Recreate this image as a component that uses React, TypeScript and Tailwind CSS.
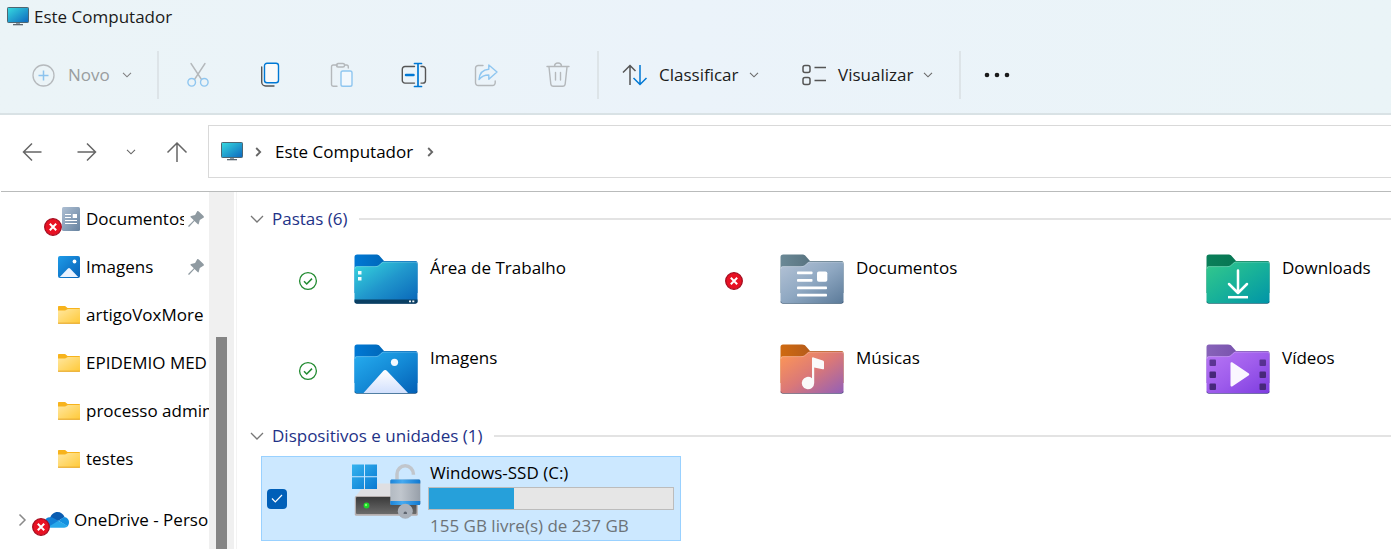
import type { ReactNode } from 'react';

type Status = 'synced' | 'error' | null;

function Chevron({ className = 'text-[#6a6a6a]' }: { className?: string }) {
  return (
    <svg width="10" height="6" viewBox="0 0 10 6" fill="none" className={`shrink-0 ${className}`} aria-hidden="true">
      <path d="M1 .8 5 4.800 9 .8" stroke="currentColor" strokeWidth="1.100" />
    </svg>
  );
}

function MonitorIcon() {
  return (
    <svg width="22" height="19" viewBox="0 0 22 19" className="shrink-0" aria-hidden="true">
      <defs>
        <linearGradient id="screen" x1="0" y1="0" x2="1" y2="1">
          <stop offset="0" stopColor="#36dbe0" />
          <stop offset="1" stopColor="#0d66be" />
        </linearGradient>
      </defs>
      <path d="M9 15h4v2.500H9z" fill="#8f9aa3" />
      <path d="M6 17h10v1.300H6z" fill="#5b6770" />
      <rect x=".5" y=".5" width="21" height="15" rx=".8" fill="url(#screen)" stroke="#4d6672" />
    </svg>
  );
}

function ErrorBadge() {
  return (
    <svg width="18" height="18" viewBox="0 0 18 18" className="shrink-0" role="img" aria-label="Erro de sincronização">
      <circle cx="9" cy="9" r="8.300" fill="#e81123" stroke="#a30d20" strokeWidth="1.300" />
      <path d="m5.800 5.800 6.400 6.400m0-6.400-6.400 6.400" stroke="#fff" strokeWidth="2" />
    </svg>
  );
}

function SyncedBadge() {
  return (
    <svg width="20" height="20" viewBox="0 0 20 20" fill="none" className="shrink-0" role="img" aria-label="Sincronizado">
      <circle cx="10" cy="10" r="8.400" stroke="#218a30" strokeWidth="1.300" />
      <path d="m6 10.300 2.700 2.700L14 7.600" stroke="#218a30" strokeWidth="1.500" />
    </svg>
  );
}

interface FolderProps {
  id: string;
  tab: [string, string];
  body: [string, string, string];
  children: ReactNode;
}

function BigFolder({ id, tab, body, children }: FolderProps) {
  return (
    <svg width="64" height="50" viewBox="0 0 64 50" className="shrink-0" aria-hidden="true">
      <defs>
        <linearGradient id={`${id}-tab`} x1="0" y1="0" x2="1" y2="0">
          <stop offset="0" stopColor={tab[0]} />
          <stop offset=".5" stopColor={tab[1]} />
        </linearGradient>
        <linearGradient id={`${id}-body`} x1="0" y1="0" x2="1" y2="1">
          <stop offset="0" stopColor={body[0]} />
          <stop offset=".5" stopColor={body[1]} />
          <stop offset="1" stopColor={body[2]} />
        </linearGradient>
      </defs>
      <path d="M.5 3a2.500 2.500 0 0 1 2.500-2.500h19c2.200 0 3.200.8 4.300 2.200L30 7h31.500a2 2 0 0 1 2 2v30H.5z" fill={`url(#${id}-tab)`} />
      <path
        d="M.5 14.500a2.300 2.300 0 0 1 2.300-2.300H21c2.500 0 3.400-.5 4.600-1.700l1.500-1.500C28 8 28.700 7.700 30.500 7.700h31a2 2 0 0 1 2 2V47a2.500 2.500 0 0 1-2.500 2.500H3A2.500 2.500 0 0 1 .5 47z"
        fill={`url(#${id}-body)`}
      />
      <path
        d="M.9 15c0-1.600.9-2.400 2.300-2.400H21c2.500 0 3.600-.6 4.800-1.800l1.500-1.500c.8-.8 1.600-1.200 3.200-1.200h31c1 0 1.600.6 1.600 1.600"
        fill="none"
        stroke="#fff"
        strokeOpacity=".3"
        strokeWidth=".8"
      />
      {children}
      <path d="M.8 47.500C1 49 2 49.500 3 49.500h58c1.200 0 2.100-.6 2.300-2" fill="none" stroke="#002440" strokeOpacity=".4" strokeWidth="1" />
    </svg>
  );
}

const desktopFolder = (
  <BigFolder id="desk" tab={['#0078d4', '#0067b8']} body={['#37d8de', '#2096cc', '#0864b8']}>
    <path d="M.5 45.500h63V47a2.500 2.500 0 0 1-2.500 2.500H3A2.500 2.500 0 0 1 .5 47z" fill="#0a3f63" />
    <path d="M4 17h3.500v3.500H4zM4 23h3.500v3.500H4zM55 46.500h2v1.700h-2zM58.300 46.500h2v1.700h-2z" fill="#fff" fillOpacity=".95" />
  </BigFolder>
);

const picturesFolder = (
  <BigFolder id="pics" tab={['#0078d4', '#0067b8']} body={['#27aef0', '#148ad6', '#035fb5']}>
    <defs>
      <linearGradient id="mountain" x1="0" y1="0" x2="0" y2="1">
        <stop offset="0" stopColor="#fff" />
        <stop offset="1" stopColor="#d2e0fd" />
      </linearGradient>
    </defs>
    <path d="M9.500 49 29 27.300c1.500-1.700 2.800-1.700 4.300 0L54 49z" fill="url(#mountain)" />
    <circle cx="40.500" cy="18.300" r="3.600" fill="#f2f8ff" />
  </BigFolder>
);

const documentsFolder = (
  <BigFolder id="docs" tab={['#6b8996', '#57727f']} body={['#b4c3d6', '#8fa8c2', '#5b7a99']}>
    <g fill="#fff">
      <rect x="17" y="17.500" width="15.500" height="2.800" rx=".8" />
      <rect x="17" y="25" width="15.500" height="2.800" rx=".8" />
      <rect x="17" y="32.500" width="30" height="2.800" rx=".8" />
      <rect x="17" y="39.700" width="30" height="2.800" rx=".8" />
      <rect x="37" y="17.500" width="10.300" height="10.300" rx="1.800" />
    </g>
  </BigFolder>
);

const musicFolder = (
  <BigFolder id="music" tab={['#cf6a10', '#b45b1b']} body={['#ff9854', '#da7878', '#925fb8']}>
    <path d="M32 14.300c0-.9.700-1.200 1.500-.9l9.300 3.200c.9.300 1.200.8 1.200 1.700v6.200c0 .8-.6 1-1.300.7l-8.500-1.800V39a6.200 6.200 0 1 1-2.200-4.700z" fill="#fafafa" />
  </BigFolder>
);

const downloadsFolder = (
  <BigFolder id="down" tab={['#0a7f59', '#077653']} body={['#35c98b', '#18b199', '#0094a8']}>
    <path d="M32 16.500v22M23 30l9 9 9-9" fill="none" stroke="#fff" strokeWidth="2.500" strokeLinecap="round" strokeLinejoin="round" />
    <path d="M22 43.200h20" stroke="#fff" strokeWidth="2.500" />
  </BigFolder>
);

const videosFolder = (
  <BigFolder id="video" tab={['#8763b9', '#7953ad']} body={['#b877f5', '#9f5dec', '#7d3ce0']}>
    <g fill="#47287a">
      <rect x="3.500" y="15.500" width="6.500" height="6.500" rx="1" opacity=".8" />
      <rect x="3.500" y="27.500" width="6.500" height="6.500" rx="1" />
      <rect x="3.500" y="39.500" width="6.500" height="6.500" rx="1" />
      <rect x="53.500" y="15.500" width="6.500" height="6.500" rx="1" opacity=".8" />
      <rect x="53.500" y="27.500" width="6.500" height="6.500" rx="1" />
      <rect x="53.500" y="39.500" width="6.500" height="6.500" rx="1" />
    </g>
    <path d="M24.500 19.500c0-1.300 1-1.700 2-1l16 10.700c1 .7 1 1.500 0 2.200l-16 10.800c-1 .7-2 .2-2-1z" fill="#faf7ff" />
  </BigFolder>
);

function DriveIcon() {
  return (
    <svg width="69" height="56" viewBox="0 0 69 56" className="shrink-0" aria-hidden="true">
      <defs>
        <linearGradient id="logo" x1="0" y1="0" x2="1" y2="1">
          <stop offset="0" stopColor="#36b3ef" />
          <stop offset="1" stopColor="#0879d2" />
        </linearGradient>
        <linearGradient id="case" x1="0" y1="0" x2="0" y2="1">
          <stop offset="0" stopColor="#3a3a3a" />
          <stop offset="1" stopColor="#6b6b6b" />
        </linearGradient>
        <linearGradient id="lock" x1="0" y1="0" x2="1" y2="0">
          <stop offset="0" stopColor="#b3bac2" />
          <stop offset=".35" stopColor="#c0c6cd" />
          <stop offset="1" stopColor="#979fa9" />
        </linearGradient>
        <linearGradient id="band" x1="0" y1="0" x2="1" y2="0">
          <stop offset="0" stopColor="#1b84d8" />
          <stop offset=".4" stopColor="#46aaf0" />
          <stop offset="1" stopColor="#1178cf" />
        </linearGradient>
      </defs>
      <path d="M3 34 14 20.500h42L66 34z" fill="#dfdfe2" />
      <rect x="2.800" y="33" width="63" height="19.800" rx="1.500" fill="#b5aeae" />
      <rect x="4" y="34" width="60.500" height="17" rx="1" fill="url(#case)" />
      <circle cx="14.500" cy="42.500" r="2.900" fill="#1bd728" />
      <circle cx="14" cy="42" r="1.200" fill="#7dff6a" />
      <path d="M0 1.500h12v11.700H0zM13 1.500h12v11.700H13zM0 14.200h12V26H0zM13 14.200h12V26H13z" fill="url(#logo)" />
      <path d="M45 17v-6a8.200 8.200 0 0 1 16.400 0v.8" fill="none" stroke="#c1c6cc" strokeWidth="3.500" />
      <rect x="38.300" y="16.500" width="30" height="25.500" rx="1.500" fill="url(#lock)" />
      <path d="M38.300 18c0-1 .7-1.500 1.500-1.500h27c1 0 1.500.5 1.500 1.500v2.500h-30zM38.300 38h30v2.500c0 1-.6 1.500-1.500 1.500h-27c-1 0-1.500-.6-1.500-1.500z" fill="url(#band)" />
      <circle cx="53.300" cy="48.300" r="7.500" fill="#aab1ba" />
      <path d="M53.300 48.500a1.700 1.700 0 0 1 1.700 1.700v.8h-3.400v-.8a1.700 1.700 0 0 1 1.700-1.700z" fill="#5f6670" />
    </svg>
  );
}

function SmallFolder() {
  return (
    <svg width="22" height="18" viewBox="0 0 22 18" className="shrink-0" aria-hidden="true">
      <defs>
        <linearGradient id="yellow" x1="0" y1="0" x2="1" y2="1">
          <stop offset="0" stopColor="#ffe7a0" />
          <stop offset="1" stopColor="#ffc937" />
        </linearGradient>
      </defs>
      <path d="M0 1C0 .4.400 0 1 0h5.500c.8 0 1.300.5 1.800 1L9.500 2H21c.6 0 1 .4 1 1v6H0z" fill="#f7b31c" />
      <path d="M0 4.500h6.800c.8 0 1.200-.2 1.700-.7.500-.6 1-.8 1.700-.8H22v14c0 .5-.3.700-.8.700H.8c-.5 0-.8-.2-.8-.7z" fill="url(#yellow)" />
      <path d="M0 17.200h22" stroke="#e5a52a" strokeWidth="1" />
    </svg>
  );
}

function SmallDocument() {
  return (
    <svg width="18" height="24" viewBox="0 0 18 24" className="shrink-0" aria-hidden="true">
      <defs>
        <linearGradient id="sheet" x1="0" y1="0" x2="1" y2="1">
          <stop offset="0" stopColor="#aebfd3" />
          <stop offset="1" stopColor="#6783a0" />
        </linearGradient>
      </defs>
      <rect width="18" height="24" rx="1.500" fill="url(#sheet)" />
      <path d="M3 7.500h6M3 10.500h6M3 13.500h12M3 16.500h12" stroke="#fff" strokeWidth="1.200" />
      <path d="M10.700 7h4.300v4h-4.300z" fill="#fff" />
    </svg>
  );
}

function SmallPicture() {
  return (
    <svg width="22" height="22" viewBox="0 0 22 22" className="shrink-0" aria-hidden="true">
      <defs>
        <linearGradient id="photo" x1="0" y1="0" x2="1" y2="1">
          <stop offset="0" stopColor="#1e9be8" />
          <stop offset="1" stopColor="#0860b6" />
        </linearGradient>
      </defs>
      <rect width="22" height="22" rx="2" fill="url(#photo)" />
      <path d="m1.800 21 7.900-8.300c.9-.9 1.700-.9 2.600 0L20.200 21z" fill="#eaf2ff" />
      <circle cx="16.500" cy="5.500" r="1.900" fill="#fff" />
    </svg>
  );
}

function CloudIcon() {
  return (
    <svg width="24" height="16" viewBox="0 0 24 16" className="shrink-0" aria-hidden="true">
      <path d="M5 6C6.200 2.500 9 0 12.500 0c3.200 0 6 2 7 5l-6.500 4z" fill="#0a5cb0" />
      <path d="M5 5.200c1.500 0 3 .5 4.200 1.300L14 9.300 4.500 15.500A5 5 0 0 1 5 5.200z" fill="#1280d6" />
      <path d="M13.500 8.700 19 5c3 .1 5 2.500 5 5.400 0 1.500-.6 2.800-1.500 3.800z" fill="#1490df" />
      <path d="m13.500 8.700 9.300 5.300c-.9 1-2.100 1.700-3.600 1.700H5.500c-1 0-1.700-.2-2.500-.6z" fill="#28a8ea" />
    </svg>
  );
}

function PinIcon() {
  return (
    <svg width="16" height="16" viewBox="0 0 16 16" className="shrink-0" aria-hidden="true">
      <path d="M9.200.3c.6-.5 1.100-.3 1.600.2l4.700 4.600c.5.500.6 1.200-.1 1.600l-3.600 2.200-1 3.900c-.2.600-.7.800-1.200.3L6.500 10 1.300 15.700H.3v-1L5.800 9.300 2.700 6.300c-.5-.5-.2-1 .4-1.200l4-1.100z" fill="#8f9aa1" />
    </svg>
  );
}

interface ToolButtonProps {
  label: string;
  disabled?: boolean;
  children: ReactNode;
}

function ToolButton({ label, disabled, children }: ToolButtonProps) {
  return (
    <button type="button" aria-label={label} disabled={disabled} className="flex h-12 w-12 shrink-0 items-center justify-center rounded">
      <svg width="26" height="26" viewBox="0 0 26 26" fill="none" strokeWidth="1.400" strokeLinecap="round" strokeLinejoin="round" aria-hidden="true">
        {children}
      </svg>
    </button>
  );
}

function Divider() {
  return <div className="h-12 w-0.5 shrink-0 bg-[#dde4e8]" />;
}

function Toolbar() {
  return (
    <div role="toolbar" aria-label="Comandos" className="flex h-[78px] items-center pt-0.5 pl-8">
      <button type="button" disabled className="flex h-12 w-[125px] shrink-0 items-center text-[#999d9f]">
        <svg width="23" height="23" viewBox="0 0 23 23" fill="none" aria-hidden="true">
          <circle cx="11.500" cy="11.500" r="10.500" stroke="#b6babd" strokeWidth="1.300" />
          <path d="M11.500 6.500v10M6.500 11.500h10" stroke="#8cc3ee" strokeWidth="1.500" />
        </svg>
        <span className="mr-3 ml-[13px]">Novo</span>
        <Chevron className="text-[#808080]" />
      </button>
      <Divider />
      <div className="mx-[15px] flex gap-6">
        <ToolButton label="Recortar" disabled>
          <path d="M6 1.500 16.500 17.500M20 1.500 9.500 17.500" stroke="#b4b8bb" />
          <circle cx="6.700" cy="20.300" r="3.800" stroke="#8fc6f0" />
          <circle cx="19.300" cy="20.300" r="3.800" stroke="#8fc6f0" />
        </ToolButton>
        <ToolButton label="Copiar">
          <path d="M4.700 5v15a4 4 0 0 0 4 4H17" stroke="#555" />
          <rect x="7.500" y="1.300" width="14" height="19.500" rx="2.500" fill="#fafafa" stroke="#0078d4" />
        </ToolButton>
        <ToolButton label="Colar" disabled>
          <path d="M8.500 3H4.300C3 3 2.500 3.700 2.500 5v17.500c0 1 .6 1.700 1.700 1.700H8M16 3h1.500c1.200 0 1.800.6 1.800 1.800V6" stroke="#b4b8bb" />
          <rect x="7.500" y="1.500" width="8" height="3.500" rx="1.500" stroke="#b4b8bb" />
          <rect x="12" y="9" width="11" height="15.200" rx="1.800" fill="#f2f8fd" stroke="#8fc6f0" />
        </ToolButton>
        <ToolButton label="Renomear">
          <path d="M13.500 4.500H4a2.700 2.700 0 0 0-2.700 2.700v11.200A2.700 2.700 0 0 0 4 21.100h9.500M20 4.500h1.800a2.700 2.700 0 0 1 2.700 2.700v11.200a2.700 2.700 0 0 1-2.700 2.700H20" stroke="#555" />
          <path d="M17 1.500v23M13.500 1.500h7M13.500 24.500h7" stroke="#0078d4" strokeWidth="1.700" />
          <path d="M5 13h7.500" stroke="#0078d4" strokeWidth="2.500" />
        </ToolButton>
        <ToolButton label="Compartilhar" disabled>
          <path d="M10 3.500H5.200A2.700 2.700 0 0 0 2.500 6.200v14.600a2.700 2.700 0 0 0 2.700 2.700h14.300a2.700 2.700 0 0 0 2.700-2.700V19" stroke="#b4b8bb" />
          <path d="M15.800 3v4.200C9.500 7.700 6.500 11 6 17.500c2.500-3.300 5.500-4.500 9.800-4.500v4.300L24 10z" stroke="#8fc6f0" />
        </ToolButton>
        <ToolButton label="Excluir" disabled>
          <path d="M2 4.500h22M4 5l1.800 17a2.700 2.700 0 0 0 2.600 2.300h9.200a2.700 2.700 0 0 0 2.600-2.300L22 5M9.500 4c.3-4 6.700-4 7 0M10.500 10.500v7.500M15.500 10.500v7.500" stroke="#b4b8bb" />
        </ToolButton>
      </div>
      <Divider />
      <button type="button" className="ml-[23px] flex h-12 w-[137px] shrink-0 items-center text-[#1b1b1b]">
        <svg width="26" height="22" viewBox="0 0 26 22" fill="none" strokeWidth="1.500" className="shrink-0" aria-hidden="true">
          <path d="M8 21V1.500M1 8.500l7-7 5.500 5.500" stroke="#555" />
          <path d="M18 1v19.500M11.500 14l6.500 6.500 6.500-6.500" stroke="#0078d4" />
        </svg>
        <span className="mr-2.5 ml-[11px]">Classificar</span>
        <Chevron />
      </button>
      <button type="button" className="ml-[43px] flex h-12 w-[133px] shrink-0 items-center text-[#1b1b1b]">
        <svg width="25" height="22" viewBox="0 0 25 22" fill="none" stroke="#555" strokeWidth="1.500" className="shrink-0" aria-hidden="true">
          <rect x="1" y="1.500" width="7" height="7" rx="2" />
          <rect x="1" y="13.500" width="7" height="7" rx="2" />
          <path d="M12.500 3.500H24M12.500 16.500H24" />
        </svg>
        <span className="mr-2.5 ml-[11px]">Visualizar</span>
        <Chevron />
      </button>
      <div className="ml-6">
        <Divider />
      </div>
      <button type="button" aria-label="Ver mais" className="ml-3 flex h-12 w-12 shrink-0 items-center justify-center">
        <svg width="26" height="6" viewBox="0 0 26 6" fill="#1b1b1b" aria-hidden="true">
          <circle cx="3" cy="3" r="2.300" />
          <circle cx="13" cy="3" r="2.300" />
          <circle cx="23" cy="3" r="2.300" />
        </svg>
      </button>
    </div>
  );
}

function NavButton({ label, children }: { label: string; children: ReactNode }) {
  return (
    <button type="button" aria-label={label} className="flex h-10 w-10 shrink-0 items-center justify-center">
      <svg width="22" height="22" viewBox="0 0 22 22" fill="none" stroke="#666" strokeWidth="1.500" aria-hidden="true">
        {children}
      </svg>
    </button>
  );
}

function Crumb() {
  return (
    <svg width="7" height="10" viewBox="0 0 7 10" fill="none" className="shrink-0" aria-hidden="true">
      <path d="m1.200 1 4 4-4 4" stroke="#666" strokeWidth="1.800" />
    </svg>
  );
}

function NavigationBar() {
  return (
    <nav aria-label="Navegação" className="ml-px flex h-[77px] items-center border-b border-[#b9bbbb] pb-[3px] pl-3">
      <NavButton label="Voltar">
        <path d="M19.500 11h-18M10 2.500 1.500 11l8.500 8.500" />
      </NavButton>
      <div className="ml-3.5">
        <NavButton label="Avançar">
          <path d="M1.500 11h18M11 2.500l8.500 8.500-8.500 8.500" />
        </NavButton>
      </div>
      <button type="button" aria-label="Locais recentes" className="ml-1 flex h-10 w-10 shrink-0 items-center justify-center">
        <Chevron className="text-[#666]" />
      </button>
      <div className="ml-1.5">
        <NavButton label="Para cima">
          <path d="M11 21V2M1.500 11.500 11 2l9.500 9.500" />
        </NavButton>
      </div>
      <div className="-mr-1 ml-[11px] flex h-[53px] flex-1 items-center border border-[#d9d9d9] pl-3">
        <MonitorIcon />
        <span className="mr-[13px] ml-3">
          <Crumb />
        </span>
        <a href="#este-computador">Este Computador</a>
        <span className="ml-3.5">
          <Crumb />
        </span>
      </div>
    </nav>
  );
}

interface SideItem {
  name: string;
  icon: ReactNode;
  pinned?: boolean;
  error?: boolean;
}

const sideItems: SideItem[] = [
  { name: 'Documentos', icon: <SmallDocument />, pinned: true, error: true },
  { name: 'Imagens', icon: <SmallPicture />, pinned: true },
  { name: 'artigoVoxMore', icon: <SmallFolder /> },
  { name: 'EPIDEMIO MED', icon: <SmallFolder /> },
  { name: 'processo administrativo', icon: <SmallFolder /> },
  { name: 'testes', icon: <SmallFolder /> },
];

function Sidebar() {
  return (
    <aside className="flex w-[236px] shrink-0 overflow-hidden">
      <div className="w-[209px] overflow-hidden pt-[3px]">
        <ul>
          {sideItems.map((item) => (
            <li key={item.name}>
              <a href={`#${item.name}`} className="relative flex h-12 items-center gap-1.5 pl-[58px]">
                <span className={item.error ? 'flex w-[22px] shrink-0 justify-end' : 'flex w-[22px] shrink-0 justify-center'}>{item.icon}</span>
                {item.error && (
                  <span className="absolute top-[23px] left-11">
                    <ErrorBadge />
                  </span>
                )}
                <span className={item.pinned ? 'w-[98px] overflow-hidden whitespace-nowrap' : 'flex-1 overflow-hidden whitespace-nowrap'}>{item.name}</span>
                {item.pinned && (
                  <span className="-ml-0.5">
                    <PinIcon />
                  </span>
                )}
              </a>
            </li>
          ))}
        </ul>
        <a href="#onedrive" className="relative mt-[13px] flex h-12 items-center pl-[18px]">
          <svg width="9" height="14" viewBox="0 0 9 14" fill="none" className="shrink-0" aria-hidden="true">
            <path d="m1.500 1.500 5.500 5.500-5.500 5.500" stroke="#8a8a8a" strokeWidth="1.500" />
          </svg>
          <span className="ml-[18px]">
            <CloudIcon />
          </span>
          <span className="absolute top-[22px] left-8">
            <ErrorBadge />
          </span>
          <span className="ml-[5px] flex-1 overflow-hidden whitespace-nowrap">OneDrive - Personal</span>
        </a>
      </div>
      <div className="flex w-[25px] justify-center bg-[#f0f0f0] pt-[145px]">
        <div className="w-[11px] bg-[#858585]" />
      </div>
    </aside>
  );
}

function GroupHeader({ children }: { children: ReactNode }) {
  return (
    <h2 className="flex h-10 items-center text-[#1e3287]">
      <button type="button" className="flex shrink-0 items-center gap-2">
        <svg width="14" height="8" viewBox="0 0 14 8" fill="none" aria-hidden="true">
          <path d="m1 1 6 6 6-6" stroke="#777" strokeWidth="1.300" />
        </svg>
        {children}
      </button>
      <span className="ml-[11px] h-0.5 flex-1 bg-[#e3e3e3]" />
    </h2>
  );
}

const folders: { name: string; status: Status; icon: ReactNode }[] = [
  { name: 'Área de Trabalho', status: 'synced', icon: desktopFolder },
  { name: 'Documentos', status: 'error', icon: documentsFolder },
  { name: 'Downloads', status: null, icon: downloadsFolder },
  { name: 'Imagens', status: 'synced', icon: picturesFolder },
  { name: 'Músicas', status: null, icon: musicFolder },
  { name: 'Vídeos', status: null, icon: videosFolder },
];

function Content() {
  return (
    <main className="min-w-0 flex-1 overflow-hidden border-l border-[#f3f3f3] pt-[7px] pl-[13px]">
      <section>
        <GroupHeader>Pastas (6)</GroupHeader>
        <ul className="ml-[11px] grid grid-cols-[repeat(3,420px)] gap-1.5">
          {folders.map((folder) => (
            <li key={folder.name}>
              <a href={`#${folder.name}`} className="flex h-[84px]">
                <span className="flex w-[93px] items-center justify-center">
                  {folder.status === 'synced' && <SyncedBadge />}
                  {folder.status === 'error' && <ErrorBadge />}
                </span>
                <span className="pt-[15px]">{folder.icon}</span>
                <span className="pt-[17px] pl-3 leading-6">{folder.name}</span>
              </a>
            </li>
          ))}
        </ul>
      </section>
      <section className="mt-[3px]">
        <GroupHeader>Dispositivos e unidades (1)</GroupHeader>
        <div className="ml-[11px] flex h-[85px] w-[420px] border border-[#99d1ff] bg-[#cce8ff]">
          <label className="flex w-[90px] items-center pl-[5px]">
            <input type="checkbox" defaultChecked aria-label="Selecionar Windows-SSD (C:)" className="peer sr-only" />
            <span className="flex h-5 w-5 items-center justify-center rounded bg-[#005fb8]">
              <svg width="12" height="9" viewBox="0 0 12 9" fill="none" aria-hidden="true">
                <path d="m1 4.500 3.300 3.300L11 1" stroke="#fff" strokeWidth="1.200" />
              </svg>
            </span>
          </label>
          <span className="pt-1.5">
            <DriveIcon />
          </span>
          <div className="ml-[7px] w-[246px]">
            <div className="mt-1 pl-0.5 leading-6">Windows-SSD (C:)</div>
            <div
              role="progressbar"
              aria-label="Espaço usado"
              aria-valuemin={0}
              aria-valuemax={237}
              aria-valuenow={82}
              className="mt-0.5 h-[23px] border border-[#bcbcbc] bg-[#e6e6e6]"
            >
              <div className="h-full w-[35%] bg-[#26a0da]" />
            </div>
            <div className="mt-1 pl-0.5 leading-6 text-[#6d7378]">155 GB livre(s) de 237 GB</div>
          </div>
        </div>
      </section>
    </main>
  );
}

export default function App() {
  return (
    <div className="flex h-screen flex-col overflow-hidden bg-white font-['Open_Sans','Noto_Sans',sans-serif] text-[17px] text-black">
      <header className="border-b-2 border-[#d9e2e5] bg-linear-to-r from-[#ebf4f7] via-[#ebf3fa] to-[#eaf4f7]">
        <h1 className="flex h-[35px] items-center gap-[5px] pb-0.5 pl-[7px] text-[#1b1b1b]">
          <MonitorIcon />
          Este Computador
        </h1>
        <Toolbar />
      </header>
      <NavigationBar />
      <div className="flex min-h-0 flex-1">
        <Sidebar />
        <Content />
      </div>
    </div>
  );
}
